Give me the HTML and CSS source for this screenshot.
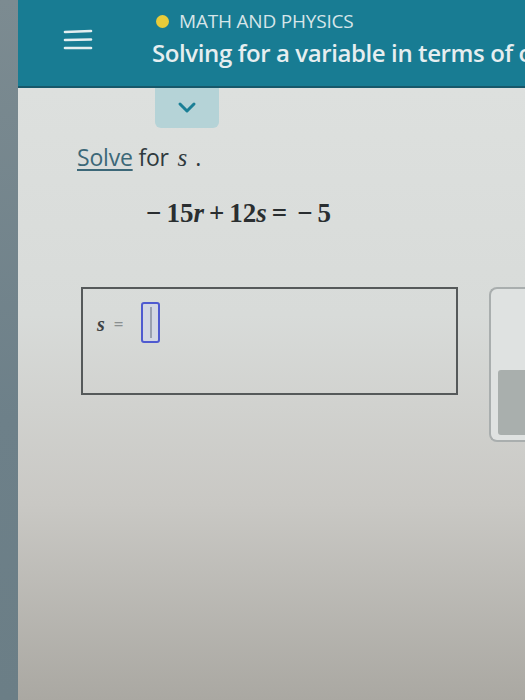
FILE: index.html
```html
<!DOCTYPE html>
<html>
<head>
<meta charset="utf-8">
<link rel="stylesheet" href="styles.css">
</head>
<body>
<div class="screen">
  <div class="bezel"></div>
  <div class="app">
    <header class="topbar">
      <div class="menu">
        <svg width="32" height="24" viewBox="0 0 32 24"><g stroke="#e4eef0" stroke-width="2.6" stroke-linecap="round"><line x1="3" y1="4" x2="29" y2="3"/><line x1="3" y1="12" x2="29" y2="11.5"/><line x1="3" y1="20" x2="29" y2="20"/></g></svg>
      </div>
      <div class="titles">
        <div class="topic"><span class="dot"></span>MATH AND PHYSICS</div>
        <div class="title">Solving for a variable in terms of other variables</div>
      </div>
    </header>
    <div class="tabrow">
      <div class="tab">
        <svg width="22" height="14" viewBox="0 0 22 14"><polyline points="4,3 11,10 18,3" fill="none" stroke="#1a7f96" stroke-width="3" stroke-linecap="round" stroke-linejoin="round"/></svg>
      </div>
    </div>
    <main class="content">
      <p class="prompt"><span class="link">Solve</span> for <i class="var">s</i><span class="period">.</span></p>
      <p class="eq"><span class="op">−</span>15<i>r</i><span class="op">+</span>12<i>s</i><span class="op">=</span><span class="op">−</span>5</p>
      <div class="answer-row">
        <div class="answer">
          <span class="lhs"><i>s</i><span class="eqsign">=</span></span>
          <span class="slot"><span class="caret"></span></span>
        </div>
        <div class="side">
          <div class="side-btn"></div>
        </div>
      </div>
    </main>
  </div>
</div>
</body>
</html>
```
FILE: styles.css
```css
html, body {
  margin: 0;
  padding: 0;
  width: 525px;
  height: 700px;
  overflow: hidden;
}
.screen {
  display: flex;
  width: 525px;
  height: 700px;
  font-family: "Open Sans", "Liberation Sans", sans-serif;
}
.bezel {
  width: 18px;
  flex: none;
  background: linear-gradient(180deg, #7c8b91 0%, #6d8089 60%, #6b7e86 100%);
}
.app {
  flex: 1;
  display: flex;
  flex-direction: column;
  background: linear-gradient(180deg, #dfe2e0 0%, #d8dbd9 45%, #c9c8c4 72%, #aaa8a2 100%);
  overflow: hidden;
}
.topbar {
  height: 88px;
  flex: none;
  background: #187c93;
  display: flex;
  align-items: flex-start;
  border-bottom: 2px solid #17586a;
  box-sizing: border-box;
}
.menu {
  margin: 28px 0 0 44px;
  width: 32px;
}
.titles {
  margin: 10px 0 0 58px;
  white-space: nowrap;
}
.topic {
  display: flex;
  align-items: center;
  font-size: 19px;
  letter-spacing: -0.2px;
  color: #d6e5e9;
  height: 22px;
}
.dot {
  width: 13px;
  height: 13px;
  border-radius: 50%;
  background: #e8cc3a;
  margin: 0 10px 0 4px;
}
.title {
  margin-top: 4px;
  font-size: 24px;
  font-weight: 600;
  color: #e6eef0;
  letter-spacing: -0.4px;
}
.tabrow {
  display: flex;
  height: 40px;
  flex: none;
}
.tab {
  margin-left: 137px;
  width: 64px;
  height: 40px;
  background: #b5d3d7;
  border-radius: 0 0 6px 6px;
  display: flex;
  align-items: center;
  justify-content: center;
}
.content {
  padding: 0 0 0 59px;
}
.prompt {
  margin: 14px 0 0 0;
  font-size: 23px;
  line-height: 30px;
  color: #2f3a3e;
  letter-spacing: -0.2px;
}
.link {
  color: #3c6878;
  text-decoration: underline;
  text-underline-offset: 3px;
}
.var {
  font-family: "Liberation Serif", serif;
  font-size: 25px;
  margin-left: 3px;
}
.period {
  margin-left: 8px;
}
.eq {
  margin: 24px 0 0 64px;
  font-family: "Liberation Serif", serif;
  font-size: 27px;
  line-height: 32px;
  font-weight: bold;
  color: #2a2e30;
}
.eq i { font-weight: bold; }
.op {
  margin: 0 5px;
}
.answer-row {
  display: flex;
  align-items: flex-start;
  margin-top: 58px;
  margin-left: 4px;
}
.answer {
  width: 373px;
  height: 104px;
  border: 2px solid #55595a;
  display: flex;
  align-items: flex-start;
}
.lhs {
  margin: 24px 0 0 14px;
  font-family: "Liberation Serif", serif;
  font-size: 20px;
  font-weight: bold;
  color: #3e4244;
  display: flex;
  align-items: center;
}
.eqsign {
  margin-left: 9px;
  color: #8a8f90;
  font-size: 17px;
}
.slot {
  margin: 13px 0 0 18px;
  width: 15px;
  height: 37px;
  border: 2px solid #4f5ad0;
  border-radius: 3px;
  background: #d3d7e3;
  display: flex;
  justify-content: center;
}
.caret {
  width: 2px;
  background: #9aa0b0;
  margin: 3px 0;
}
.side {
  margin-left: 31px;
  flex: 1;
  height: 155px;
  border: 2px solid #a9aeae;
  border-right: none;
  border-radius: 8px 0 0 8px;
  background: #dfe2e1;
  display: flex;
  flex-direction: column;
  justify-content: flex-end;
  padding-bottom: 5px;
  box-sizing: border-box;
}
.side-btn {
  margin-left: 7px;
  height: 65px;
  background: #a9afad;
  border-radius: 3px 0 0 3px;
}
```
